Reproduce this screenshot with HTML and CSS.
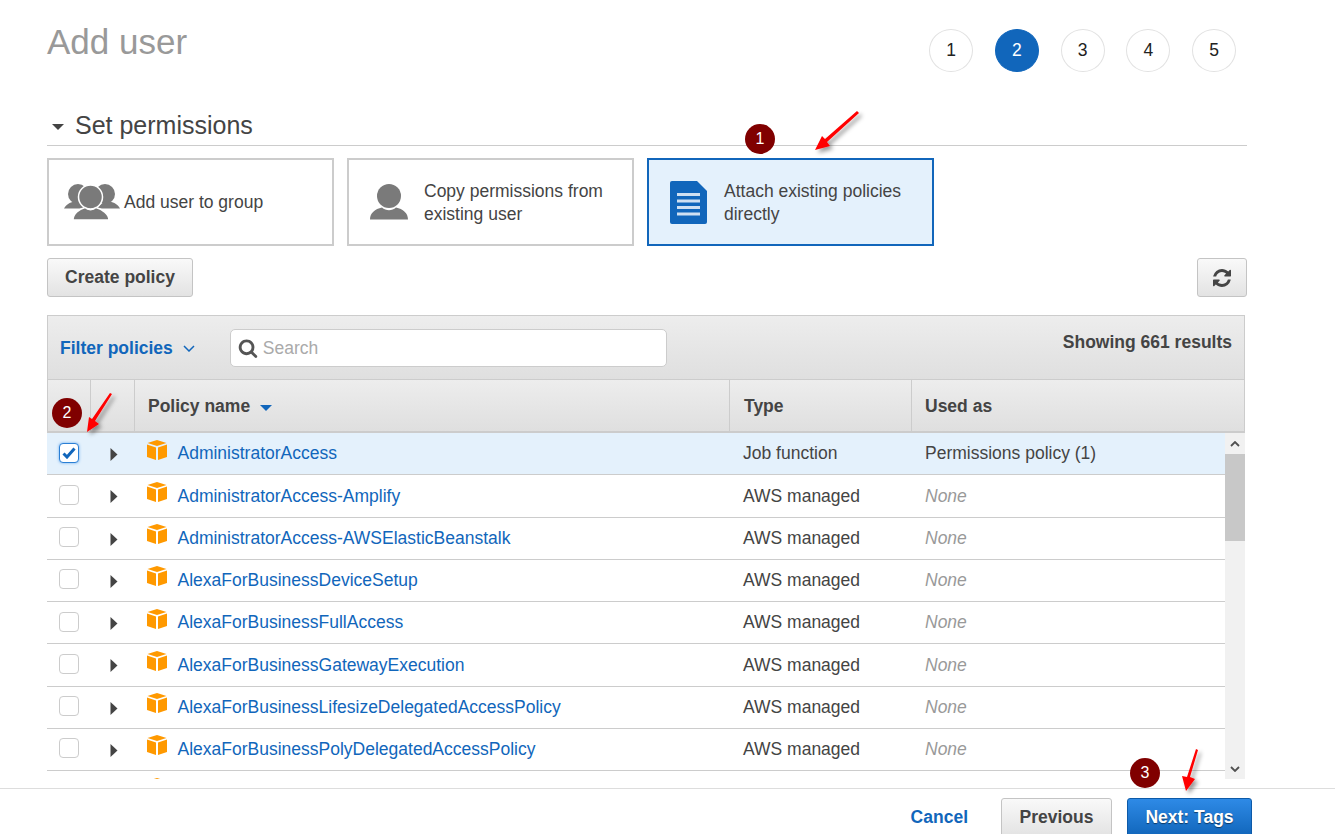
FILE: index.html
```html
<!DOCTYPE html>
<html lang="en">
<head>
<meta charset="utf-8">
<title>Add user</title>
<link rel="stylesheet" href="styles.css">
</head>
<body>
<svg width="0" height="0" class="defs">
  <defs>
    <symbol id="cube" viewBox="0 0 20 20">
      <path fill="#ff9900" d="M10 0 19.500 3 10 6 .5 3z"/>
      <path fill="#ff9900" d="M0 4.500 9 7.400V20L0 17z"/>
      <path fill="#ff9900" d="M20 4.500 11 7.400V20l9-3z"/>
    </symbol>
    <symbol id="caret" viewBox="0 0 8 13"><path fill="#444" d="M0.500 0 7.500 6.500 0.500 13z"/></symbol>
  </defs>
</svg>

<main class="main">
  <header class="top">
    <h1 class="title">Add user</h1>
    <ol class="steps">
      <li class="step">1</li>
      <li class="step step-on">2</li>
      <li class="step">3</li>
      <li class="step">4</li>
      <li class="step">5</li>
    </ol>
  </header>

  <h2 class="section"><span class="section-caret"></span>Set permissions</h2>

  <div class="cards">
    <div class="card">
      <svg class="ico-group" viewBox="0 0 56 36">
        <g fill="#7a7a7a">
          <circle cx="14" cy="10" r="10"/><circle cx="41" cy="10" r="10"/>
          <path d="M0 24.500C2 20 8 17 15 17L24 24.500z"/><path d="M56 24.500C54 20 48 17 41 17L32 24.500z"/>
        </g>
        <circle cx="26.500" cy="13" r="12" fill="#7a7a7a" stroke="#fff" stroke-width="1.500"/>
        <path fill="#7a7a7a" stroke="#fff" stroke-width="1.500" d="M9 36C9 30 15 25 21 23.500 24 26.500 29 26.500 32 23.500 38 25 45 30 45 36z"/>
      </svg>
      <span class="card-text card-text-tight">Add user to group</span>
    </div>
    <div class="card">
      <svg class="ico-person" viewBox="0 0 38 36">
        <circle cx="19" cy="12" r="12" fill="#7a7a7a"/>
        <path fill="#7a7a7a" d="M0 35.500C0 29 5 25 12 23.500 16 27 22 27 26 23.500 33 25 38 29 38 35.500z"/>
      </svg>
      <span class="card-text">Copy permissions from<br>existing user</span>
    </div>
    <div class="card card-on">
      <svg class="ico-doc" viewBox="0 0 37 43">
        <path fill="#1166bb" d="M2 0H27L37 10V41Q37 43 35 43H2Q0 43 0 41V2Q0 0 2 0z"/>
        <path fill="#cfe0f2" d="M7 12H30V15H7zM7 18.500H30V21.500H7zM7 25H30V28H7zM7 31.500H30V34.500H7z"/>
      </svg>
      <span class="card-text">Attach existing policies<br>directly</span>
    </div>
  </div>

  <div class="tools">
    <button class="btn btn-create" type="button">Create policy</button>
    <button class="btn btn-refresh" type="button" aria-label="Refresh">
      <svg class="ico-refresh" viewBox="0 0 1536 1536"><path fill="#444" d="M1511 928q0 5-1 7-64 268-268 434.500t-478 166.500q-146 0-282.500-55t-243.500-157l-129 129q-19 19-45 19t-45-19-19-45v-448q0-26 19-45t45-19h448q26 0 45 19t19 45-19 45l-137 137q71 66 161 102t187 36q134 0 250-65t186-179q11-17 53-117 8-23 30-23h192q13 0 22.500 9.500t9.500 22.500zm25-800v448q0 26-19 45t-45 19h-448q-26 0-45-19t-19-45 19-45l138-138q-148-137-349-137-134 0-250 65t-186 179q-11 17-53 117-8 23-30 23h-199q-13 0-22.500-9.500t-9.500-22.500v-7q65-268 270-434.500t480-166.500q146 0 284 55.500t245 156.500l130-129q19-19 45-19t45 19 19 45z"/></svg>
    </button>
  </div>

  <section class="panel">
    <div class="filter">
      <span class="filter-label">Filter policies</span>
      <svg class="chev" viewBox="0 0 12 7"><path fill="none" stroke="#1166bb" stroke-width="1.500" d="M1 1l5 5 5-5"/></svg>
      <div class="search">
        <svg class="ico-search" viewBox="0 0 1792 1792"><path fill="#555" d="M1216 832q0-185-131.500-316.500t-316.500-131.500-316.500 131.500-131.500 316.500 131.500 316.500 316.500 131.500 316.500-131.500 131.500-316.500zm512 832q0 52-38 90t-90 38q-54 0-90-38l-343-342q-179 124-399 124-143 0-273.500-55.500t-225-150-150-225-55.500-273.500 55.500-273.500 150-225 225-150 273.500-55.500 273.500 55.500 225 150 150 225 55.500 273.500q0 220-124 399l343 343q37 37 37 90z"/></svg>
        <span class="search-ph">Search</span>
      </div>
      <span class="count">Showing 661 results</span>
    </div>

    <div class="thead">
      <div class="th"></div>
      <div class="th"></div>
      <div class="th th-name">Policy name<span class="sort"></span></div>
      <div class="th th-type">Type</div>
      <div class="th th-last">Used as</div>
    </div>

    <div class="tbody">
      <div class="rows">
        <div class="row row-on">
          <span class="cell"><span class="check check-on"><svg viewBox="0 0 14 12"><path fill="none" stroke="#1166bb" stroke-width="3" d="M1.500 6.500 5 10 12.500 1.500"/></svg></span></span>
          <span class="cell"><svg class="exp"><use href="#caret"/></svg></span>
          <span class="cell cell-name"><svg class="cube"><use href="#cube"/></svg><a class="link">AdministratorAccess</a></span>
          <span class="cell cell-txt">Job function</span>
          <span class="cell cell-txt">Permissions policy (1)</span>
        </div>
        <div class="row">
          <span class="cell"><span class="check"></span></span>
          <span class="cell"><svg class="exp"><use href="#caret"/></svg></span>
          <span class="cell cell-name"><svg class="cube"><use href="#cube"/></svg><a class="link">AdministratorAccess-Amplify</a></span>
          <span class="cell cell-txt">AWS managed</span>
          <span class="cell cell-txt none">None</span>
        </div>
        <div class="row">
          <span class="cell"><span class="check"></span></span>
          <span class="cell"><svg class="exp"><use href="#caret"/></svg></span>
          <span class="cell cell-name"><svg class="cube"><use href="#cube"/></svg><a class="link">AdministratorAccess-AWSElasticBeanstalk</a></span>
          <span class="cell cell-txt">AWS managed</span>
          <span class="cell cell-txt none">None</span>
        </div>
        <div class="row">
          <span class="cell"><span class="check"></span></span>
          <span class="cell"><svg class="exp"><use href="#caret"/></svg></span>
          <span class="cell cell-name"><svg class="cube"><use href="#cube"/></svg><a class="link">AlexaForBusinessDeviceSetup</a></span>
          <span class="cell cell-txt">AWS managed</span>
          <span class="cell cell-txt none">None</span>
        </div>
        <div class="row">
          <span class="cell"><span class="check"></span></span>
          <span class="cell"><svg class="exp"><use href="#caret"/></svg></span>
          <span class="cell cell-name"><svg class="cube"><use href="#cube"/></svg><a class="link">AlexaForBusinessFullAccess</a></span>
          <span class="cell cell-txt">AWS managed</span>
          <span class="cell cell-txt none">None</span>
        </div>
        <div class="row">
          <span class="cell"><span class="check"></span></span>
          <span class="cell"><svg class="exp"><use href="#caret"/></svg></span>
          <span class="cell cell-name"><svg class="cube"><use href="#cube"/></svg><a class="link">AlexaForBusinessGatewayExecution</a></span>
          <span class="cell cell-txt">AWS managed</span>
          <span class="cell cell-txt none">None</span>
        </div>
        <div class="row">
          <span class="cell"><span class="check"></span></span>
          <span class="cell"><svg class="exp"><use href="#caret"/></svg></span>
          <span class="cell cell-name"><svg class="cube"><use href="#cube"/></svg><a class="link">AlexaForBusinessLifesizeDelegatedAccessPolicy</a></span>
          <span class="cell cell-txt">AWS managed</span>
          <span class="cell cell-txt none">None</span>
        </div>
        <div class="row">
          <span class="cell"><span class="check"></span></span>
          <span class="cell"><svg class="exp"><use href="#caret"/></svg></span>
          <span class="cell cell-name"><svg class="cube"><use href="#cube"/></svg><a class="link">AlexaForBusinessPolyDelegatedAccessPolicy</a></span>
          <span class="cell cell-txt">AWS managed</span>
          <span class="cell cell-txt none">None</span>
        </div>
        <div class="row">
          <span class="cell"></span>
          <span class="cell"></span>
          <span class="cell cell-name"><svg class="cube"><use href="#cube"/></svg></span>
        </div>
      </div>
      <div class="scrollbar">
        <div class="sb-btn"><svg class="sb-chev" viewBox="0 0 10 6"><path fill="none" stroke="#505050" stroke-width="1.800" d="M1 5l4-4 4 4"/></svg></div>
        <div class="sb-track"><div class="sb-thumb"></div></div>
        <div class="sb-btn"><svg class="sb-chev" viewBox="0 0 10 6"><path fill="none" stroke="#505050" stroke-width="1.800" d="M1 1l4 4 4-4"/></svg></div>
      </div>
    </div>
  </section>
</main>

<footer class="footer">
  <a class="cancel">Cancel</a>
  <button class="btn btn-prev" type="button">Previous</button>
  <button class="btn btn-next" type="button">Next: Tags</button>
</footer>

<svg class="arrows" viewBox="0 0 1335 834">
  <defs>
    <filter id="sh" x="-50%" y="-50%" width="200%" height="200%"><feDropShadow dx="3" dy="3" stdDeviation="2" flood-color="#000" flood-opacity=".4"/></filter>
  </defs>
  <g fill="#ff0000" filter="url(#sh)">
    <path d="M857 111 859 113 827 142 830 146 815 150 822 136 825 139z"/>
    <path d="M110 393 112 394 95 421 99 424 87 432 89 417 92 419z"/>
    <path d="M1196 749 1198 750 1190 777 1195 779 1186 791 1182 776 1187 777z"/>
  </g>
</svg>
<span class="badge badge-1">1</span>
<span class="badge badge-2">2</span>
<span class="badge badge-3">3</span>
</body>
</html>
```
FILE: styles.css
```css
* { box-sizing: border-box; }
html, body { margin: 0; height: 834px; overflow: hidden; }
body {
  position: relative;
  display: flex;
  flex-direction: column;
  width: 1335px;
  background: #fff;
  color: #444;
  font-family: "Liberation Sans", Arial, sans-serif;
  font-size: 17.5px;
}
.defs { position: absolute; }

.main { flex: 1 1 auto; padding-left: 47px; width: 1247px; min-height: 0; }

.top { display: flex; justify-content: space-between; align-items: flex-start; height: 100px; padding-right: 11px; }
.title { margin: 22px 0 0; font-size: 35px; line-height: 40px; font-weight: 400; color: #999; }
.steps { display: flex; gap: 21.75px; margin: 28.5px 0 0; padding: 0; list-style: none; }
.step {
  width: 44px; height: 43.5px; border: 1.5px solid #e2e2e2; border-radius: 50%;
  display: flex; align-items: center; justify-content: center;
  color: #222; font-size: 17.5px; background: #fff;
}
.step-on { background: #1166bb; border-color: #1166bb; color: #fff; }

.section {
  margin: 0; height: 46px; border-bottom: 1px solid #ccc;
  display: flex; align-items: center; padding: 5px 0 0 5px;
  font-size: 25px; font-weight: 400; color: #444;
}
.section-caret {
  width: 0; height: 0; margin-right: 11px; margin-top: 3px;
  border-left: 6px solid transparent; border-right: 6px solid transparent; border-top: 6px solid #444;
}

.cards { display: flex; gap: 13px; margin-top: 12px; }
.card {
  width: 287px; height: 88px; border: 2px solid #ccc; background: #fff;
  display: flex; align-items: center; color: #444; line-height: 23px;
}
.card-on { border-color: #1166bb; background: #e4f1fc; }
.card-text { display: block; margin-left: 17px; padding-top: 2px; }
.ico-person + .card-text { margin-left: 16px; }
.card-text-tight { margin-left: 4px; padding-top: 0; }
.ico-group { width: 56px; height: 36px; margin-left: 15px; flex: none; }
.ico-person { width: 38px; height: 36px; margin-left: 21px; flex: none; }
.ico-doc { width: 37px; height: 43px; margin-left: 21px; flex: none; }

.tools { display: flex; justify-content: space-between; margin-top: 12px; }
.btn {
  font-family: inherit; font-size: 17.5px; font-weight: 700; color: #444;
  border: 1px solid #c4c4c4; border-radius: 3px; height: 39px; padding: 0;
  background: linear-gradient(#f9f9f9, #e3e3e3);
  display: flex; align-items: center; justify-content: center;
}
.btn-create { width: 146px; }
.btn-refresh { width: 50px; }
.ico-refresh { width: 18px; height: 18px; }

.panel { margin-top: 18px; width: 1198px; }
.filter {
  height: 64px; position: relative; display: flex; align-items: flex-start;
  border: 1px solid #ccc; border-bottom: 0;
  background: linear-gradient(#ededed, #dfdfdf);
}
.filter-label { margin: 22px 0 0 12px; font-weight: 700; color: #1166bb; line-height: 20px; }
.chev { width: 12px; height: 7px; margin: 29px 0 0 10px; flex: none; }
.search {
  margin: 13px 0 0 35px; width: 437px; height: 38px; background: #fff;
  border: 1px solid #ccc; border-radius: 5px; display: flex; align-items: center; padding-left: 7px;
}
.ico-search { width: 20px; height: 20px; flex: none; }
.search-ph { margin-left: 5px; color: #aaa; }
.count { margin: 16px 12px 0 auto; font-weight: 700; line-height: 20px; }

.thead {
  display: grid; grid-template-columns: 43px 44px 595px 182px 1fr; height: 54px;
  border: 1px solid #ccc; border-bottom-width: 2px;
  background: linear-gradient(#ededed, #dfdfdf);
}
.th {
  border-right: 1px solid #ccc; display: flex; align-items: center; padding: 1px 0 0 13px;
  font-weight: 700;
}
.th-type { padding-left: 14px; }
.th-last { border-right: 0; }
.sort {
  width: 0; height: 0; margin-left: 10px; margin-top: 3px;
  border-left: 6px solid transparent; border-right: 6px solid transparent; border-top: 6px solid #1166bb;
}

.tbody { display: flex; height: 346px; overflow: hidden; }
.rows { width: 1178px; flex: none; overflow: hidden; }
.row {
  display: grid; grid-template-columns: 44px 44px 595px 182px 1fr; height: 42.25px;
  border-bottom: 1px solid #ccc; align-items: center;
}
.row-on { background: #e4f1fc; }
.cell { display: flex; align-items: center; justify-content: center; min-width: 0; white-space: nowrap; }
.cell-name { justify-content: flex-start; padding-left: 12px; }
.cell-txt { justify-content: flex-start; padding: 0.5px 0 0 13px; }
.none { color: #999; font-style: italic; }
.link { color: #1166bb; margin: 0.5px 0 0 10.5px; }
.cube { width: 20px; height: 20px; flex: none; margin-top: -8px; }
.exp { width: 8px; height: 13px; margin-left: 2px; margin-top: 2px; }
.check {
  width: 20px; height: 20px; border: 1px solid #ccc; border-radius: 4px; background: #fff;
  display: flex; align-items: center; justify-content: center; margin-top: -2px;
}
.check svg { width: 14px; height: 12px; }
.check-on { border-color: #2a7fd5; box-shadow: 0 0 3px #66aaee; }

.scrollbar { width: 20px; flex: none; display: flex; flex-direction: column; background: #f1f1f1; }
.sb-btn { height: 21px; flex: none; display: flex; align-items: center; justify-content: center; }
.sb-chev { width: 10px; height: 6px; }
.sb-track { flex: 1 1 auto; }
.sb-thumb { height: 87px; background: #c8c8c8; }

.footer {
  flex: none; height: 46px; border-top: 1px solid #ddd; background: #fff;
  display: flex; align-items: flex-start; justify-content: flex-end; padding: 9px 83px 0 0;
}
.cancel { font-weight: 700; color: #1166bb; margin: 9px 33px 0 0; line-height: 20px; }
.btn-prev { width: 111px; margin-right: 15px; }
.btn-next {
  width: 125px; color: #fff; border-color: #0d5aa8;
  background: linear-gradient(#2e8ae6, #1166bb);
  text-shadow: 0 1px 1px rgba(0, 0, 0, .5);
}

.arrows { position: absolute; left: 0; top: 0; width: 1335px; height: 834px; pointer-events: none; }
.badge {
  position: absolute; width: 30px; height: 30px; border-radius: 50%; background: #800000;
  color: #fff; font-size: 16px; display: flex; align-items: center; justify-content: center;
}
.badge-1 { left: 745px; top: 124px; }
.badge-2 { left: 52px; top: 398px; }
.badge-3 { left: 1130px; top: 758px; }
```
